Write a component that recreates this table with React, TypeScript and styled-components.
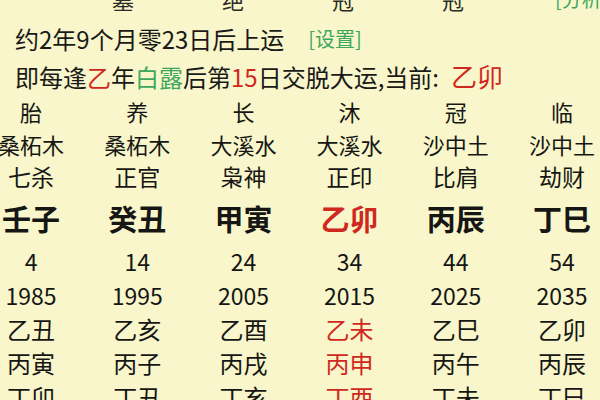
import React from "react";
import styled, { createGlobalStyle } from "styled-components";

const Global = createGlobalStyle`
  html, body {
    margin: 0;
    padding: 0;
    background: #f8f6ca;
    overflow: hidden;
  }
  body {
    font-family: "Noto Sans CJK SC", "Noto Sans", sans-serif;
    color: #161614;
  }
`;

const RED = "#d0281f";
const GREEN = "#3ea75e";

const Page = styled.div`
  width: 600px;
  height: 400px;
  overflow: hidden;
  background: #f8f6ca;
`;

const TopRow = styled.div`
  display: grid;
  grid-template-columns: repeat(4, 110px) auto;
  padding-left: 68px;
  margin-top: -13px;
  height: 24px;
  line-height: 24px;
  font-size: 22px;
  text-align: center;
  color: #2a2a26;
`;

const TopLink = styled.span`
  text-align: left;
  padding-left: 47px;
  font-size: 20px;
  color: ${GREEN};
  white-space: nowrap;
`;

const InfoLine = styled.div<{ $first?: boolean }>`
  display: flex;
  align-items: center;
  gap: 24px;
  height: 37px;
  margin-top: ${(p) => (p.$first ? "9px" : "0")};
  padding-left: 15px;
  font-size: 24px;
  white-space: nowrap;
  color: #1a1a18;
`;

const Hl = styled.span<{ $tone: "red" | "green" }>`
  color: ${(p) => (p.$tone === "red" ? RED : GREEN)};
`;

const Setting = styled.span`
  font-size: 20px;
  color: ${GREEN};
`;

const Current = styled.span`
  font-size: 26px;
  color: ${RED};
  margin-left: 12px;
`;

const Table = styled.div`
  margin-left: -22px;
  width: 637px;
`;

const Row = styled.div<{ $h: number; $size: number; $bold?: boolean }>`
  display: grid;
  grid-template-columns: repeat(6, 1fr);
  height: ${(p) => p.$h}px;
  line-height: ${(p) => p.$h}px;
  font-size: ${(p) => p.$size}px;
  font-weight: ${(p) => (p.$bold ? 700 : 400)};
  text-align: center;
  white-space: nowrap;
`;

const Cell = styled.span<{ $red?: boolean }>`
  color: ${(p) => (p.$red ? RED : "#161614")};
`;

type Col = {
  cs: string;
  ny: string;
  ss: string;
  gz: string;
  age: number;
  year: number;
  ly: string[];
  hot?: boolean;
};

const cols: Col[] = [
  { cs: "胎", ny: "桑柘木", ss: "七杀", gz: "壬子", age: 4, year: 1985, ly: ["乙丑", "丙寅", "丁卯"] },
  { cs: "养", ny: "桑柘木", ss: "正官", gz: "癸丑", age: 14, year: 1995, ly: ["乙亥", "丙子", "丁丑"] },
  { cs: "长", ny: "大溪水", ss: "枭神", gz: "甲寅", age: 24, year: 2005, ly: ["乙酉", "丙戌", "丁亥"] },
  { cs: "沐", ny: "大溪水", ss: "正印", gz: "乙卯", age: 34, year: 2015, ly: ["乙未", "丙申", "丁酉"], hot: true },
  { cs: "冠", ny: "沙中土", ss: "比肩", gz: "丙辰", age: 44, year: 2025, ly: ["乙巳", "丙午", "丁未"] },
  { cs: "临", ny: "沙中土", ss: "劫财", gz: "丁巳", age: 54, year: 2035, ly: ["乙卯", "丙辰", "丁巳"] },
];

type RowDef = {
  h: number;
  size: number;
  bold?: boolean;
  get: (c: Col) => string | number;
  red?: (c: Col) => boolean;
};

const rows: RowDef[] = [
  { h: 34, size: 22, get: (c) => c.cs },
  { h: 32, size: 22, get: (c) => c.ny },
  { h: 32, size: 23, get: (c) => c.ss },
  { h: 52, size: 29, bold: true, get: (c) => c.gz, red: (c) => !!c.hot },
  { h: 34, size: 23, get: (c) => c.age },
  { h: 34, size: 23, get: (c) => c.year },
  { h: 34, size: 24, get: (c) => c.ly[0], red: (c) => !!c.hot },
  { h: 34, size: 24, get: (c) => c.ly[1], red: (c) => !!c.hot },
  { h: 34, size: 24, get: (c) => c.ly[2], red: (c) => !!c.hot },
];

export default function App() {
  return (
    <Page>
      <Global />
      <TopRow>
        <span>墓</span>
        <span>绝</span>
        <span>冠</span>
        <span>冠</span>
        <TopLink>[分析]</TopLink>
      </TopRow>
      <InfoLine $first>
        <span>约2年9个月零23日后上运</span>
        <Setting>[设置]</Setting>
      </InfoLine>
      <InfoLine>
        <span>
          即每逢<Hl $tone="red">乙</Hl>年<Hl $tone="green">白露</Hl>后第
          <Hl $tone="red">15</Hl>日交脱大运,当前:
          <Current>乙卯</Current>
        </span>
      </InfoLine>
      <Table>
        {rows.map((r, i) => (
          <Row key={i} $h={r.h} $size={r.size} $bold={r.bold}>
            {cols.map((c, j) => (
              <Cell key={j} $red={r.red ? r.red(c) : false}>
                {r.get(c)}
              </Cell>
            ))}
          </Row>
        ))}
      </Table>
    </Page>
  );
}
